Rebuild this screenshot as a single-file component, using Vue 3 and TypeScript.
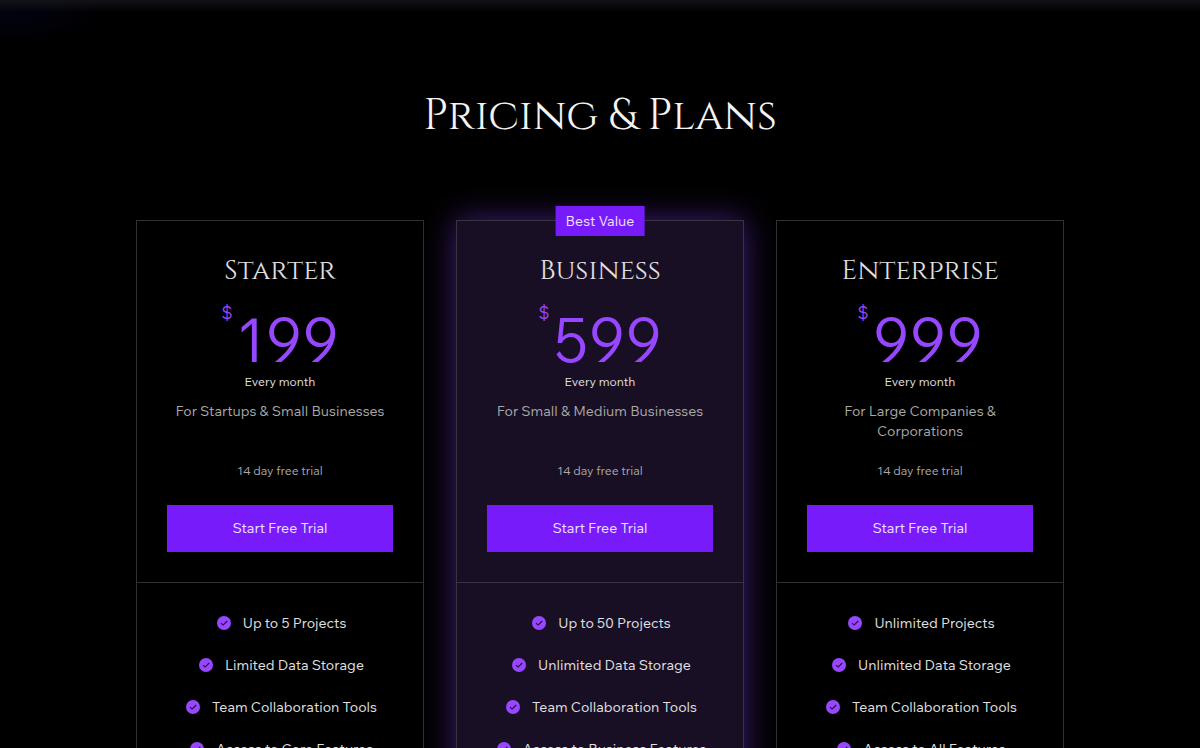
<script setup lang="ts">
interface Plan {
  name: string
  price: string
  description: string
  features: string[]
  badge?: string
}

const plans: Plan[] = [
  {
    name: 'Starter',
    price: '199',
    description: 'For Startups & Small Businesses',
    features: ['Up to 5 Projects', 'Limited Data Storage', 'Team Collaboration Tools', 'Access to Core Features'],
  },
  {
    name: 'Business',
    price: '599',
    description: 'For Small & Medium Businesses',
    features: ['Up to 50 Projects', 'Unlimited Data Storage', 'Team Collaboration Tools', 'Access to Business Features'],
    badge: 'Best Value',
  },
  {
    name: 'Enterprise',
    price: '999',
    description: 'For Large Companies & Corporations',
    features: ['Unlimited Projects', 'Unlimited Data Storage', 'Team Collaboration Tools', 'Access to All Features'],
  },
]
</script>

<template>
  <main class="pricing">
    <h1 class="title">Pricing &amp; Plans</h1>
    <div class="plans">
      <article v-for="plan in plans" :key="plan.name" class="plan" :class="{ featured: plan.badge }">
        <span v-if="plan.badge" class="badge">{{ plan.badge }}</span>
        <div class="summary">
          <h2 class="name">{{ plan.name }}</h2>
          <p class="price"><span class="currency">$</span><span class="amount">{{ plan.price }}</span></p>
          <p class="period">Every month</p>
          <p class="description">{{ plan.description }}</p>
          <p class="trial">14 day free trial</p>
          <button type="button" class="cta">Start Free Trial</button>
        </div>
        <ul class="features">
          <li v-for="feature in plan.features" :key="feature" class="feature">
            <svg class="check" viewBox="0 0 14 14" aria-hidden="true">
              <circle cx="7" cy="7" r="7" fill="#9747ff" />
              <path d="M4 7.2 6.1 9.1 10.2 5" fill="none" stroke="#1c0b33" stroke-width="1.1" />
            </svg>
            <span>{{ feature }}</span>
          </li>
        </ul>
      </article>
    </div>
  </main>
</template>

<style>
body {
  margin: 0;
  background: #000;
}
</style>

<style scoped>
.pricing {
  box-sizing: border-box;
  min-height: 100vh;
  padding: 86px 24px 40px;
  color: #e0e0e0;
  font-family: "Wix Madefor Text", "Open Sans", sans-serif;
  font-size: 14px;
  line-height: 20px;
  background:
    linear-gradient(rgba(20, 20, 25, 0.9), rgba(0, 0, 0, 0) 12px),
    radial-gradient(ellipse 120px 50px at 0 0, #030314, rgba(0, 0, 0, 0)),
    #000;
}

.title {
  margin: 0;
  color: #f4f4f4;
  font-family: Cinzel, "Liberation Serif", serif;
  font-size: 43px;
  font-weight: 400;
  line-height: 60px;
  text-align: center;
}

.plans {
  display: grid;
  grid-template-columns: repeat(3, minmax(0, 1fr));
  gap: 32px;
  max-width: 928px;
  margin: 74px auto 0;
}

.plan {
  position: relative;
  border: 1px solid #303030;
  text-align: center;
}

.featured {
  background: #190f24;
  border-color: #3a3342;
  box-shadow: 0 0 30px rgba(130, 60, 240, 0.5);
}

.badge {
  position: absolute;
  top: -15px;
  left: 50%;
  padding: 5px 10px;
  transform: translateX(-50%);
  color: #eee0ff;
  background: #781bfa;
  white-space: nowrap;
}

.summary {
  padding: 30px;
  border-bottom: 1px solid #303030;
}

.featured .summary {
  border-color: #3a3342;
}

.name {
  margin: 0;
  font-family: Cinzel, "Liberation Serif", serif;
  font-size: 28px;
  font-weight: 400;
  line-height: 40px;
}

.price {
  display: flex;
  justify-content: center;
  gap: 4px;
  min-height: 71px;
  margin: 10px 0 0;
  color: #9747ff;
}

.currency {
  font-size: 18px;
  line-height: 24px;
}

.amount {
  align-self: flex-end;
  font-size: 60px;
  line-height: 64px;
}

.period {
  margin: 0;
  font-size: 12px;
}

.description {
  min-height: 40px;
  margin: 9px 0 0;
  color: #a8a8a8;
}

.trial {
  margin: 20px 0 0;
  color: #a8a8a8;
  font-size: 12px;
}

.cta {
  width: 100%;
  margin: 24px 0 0;
  padding: 13px;
  border: 0;
  color: #eee0ff;
  background: #781bfa;
  font: inherit;
  line-height: 21px;
  cursor: pointer;
}

.features {
  display: grid;
  gap: 22px;
  margin: 0;
  padding: 30px 29px 30px 32px;
  list-style: none;
}

.feature {
  display: flex;
  align-items: center;
  justify-content: center;
  gap: 12px;
}

.check {
  flex: none;
  width: 14px;
  height: 14px;
}
</style>
